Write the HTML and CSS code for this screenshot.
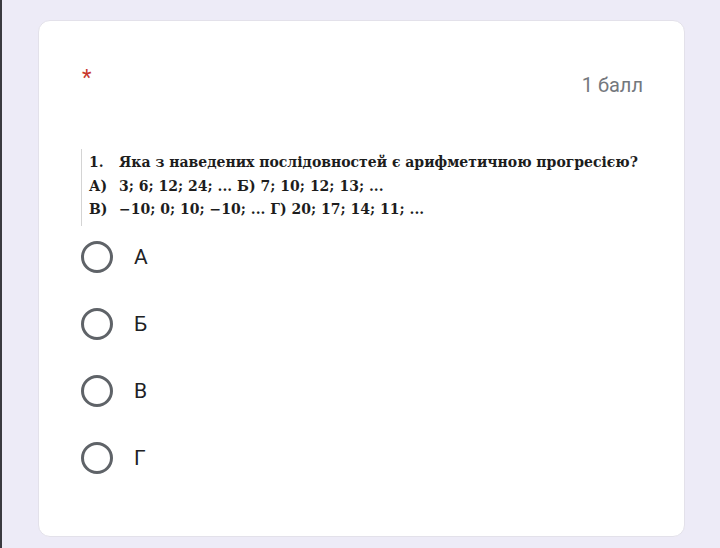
FILE: index.html
```html
<html><head>
<meta charset="UTF-8">
<meta name="viewport" content="width=device-width, initial-scale=1.0">
<title>Тест</title>
<link rel="stylesheet" href="styles.css">
</head>
<body>
    <div class="card">
        <div class="card-head">
            <span class="required">*</span>
            <span class="points">1 балл</span>
        </div>

        <!-- question printed as a scan in the original -->
        <div class="question">
            <div class="q-line"><span class="q-num">1.</span>Яка з наведених послідовностей є арифметичною прогресією?</div>
            <div class="q-line"><span class="q-num">А)</span>3; 6; 12; 24; ... Б) 7; 10; 12; 13; ...</div>
            <div class="q-line"><span class="q-num">В)</span>−10; 0; 10; −10; ... Г) 20; 17; 14; 11; ...</div>
        </div>

        <div class="options">
            <label class="option"><span class="radio"></span>А</label>
            <label class="option"><span class="radio"></span>Б</label>
            <label class="option"><span class="radio"></span>В</label>
            <label class="option"><span class="radio"></span>Г</label>
        </div>
    </div>
</body></html>
```
FILE: styles.css
```css
body {
    font-family: Roboto, "Liberation Sans", sans-serif;
    background-color: #edebf7;
    border-left: 2px solid #3a3a40;
    margin: 0;
    padding: 20px 35px 12px 36px;
    height: 548px;
    box-sizing: border-box;
}

.card {
    background-color: white;
    border: 1px solid #e3e1ea;
    border-radius: 12px;
    height: 517px;
    box-sizing: border-box;
    padding: 0 0 0 42px;
}

.card-head {
    display: flex;
    justify-content: space-between;
    align-items: flex-start;
    padding: 45px 41px 0 0;
    height: 98px;
    box-sizing: border-box;
}

.required {
    color: #c8372d;
    font-size: 22px;
    line-height: 24px;
    margin-left: 1px;
}

.points {
    color: #74787d;
    font-size: 20px;
    line-height: 24px;
    margin-top: 7px;
}

.question {
    border-left: 1px solid #d4d4d4;
    margin-top: 30px;
    padding: 2px 0 4px 7px;
    font-family: "DejaVu Serif", "Liberation Serif", serif;
    font-weight: bold;
    font-size: 14px;
    line-height: 23.5px;
    color: #1d1d1d;
    width: 570px;
}

.q-line {
    display: flex;
    white-space: nowrap;
}

.q-num {
    width: 30px;
    flex-shrink: 0;
}

.options {
    display: flex;
    flex-direction: column;
    gap: 35px;
    margin-top: 15px;
}

.option {
    display: flex;
    align-items: center;
    gap: 21px;
    font-size: 21px;
    color: #202124;
    height: 32px;
}

.radio {
    width: 26px;
    height: 26px;
    border: 3px solid #5f6368;
    border-radius: 50%;
}
```
